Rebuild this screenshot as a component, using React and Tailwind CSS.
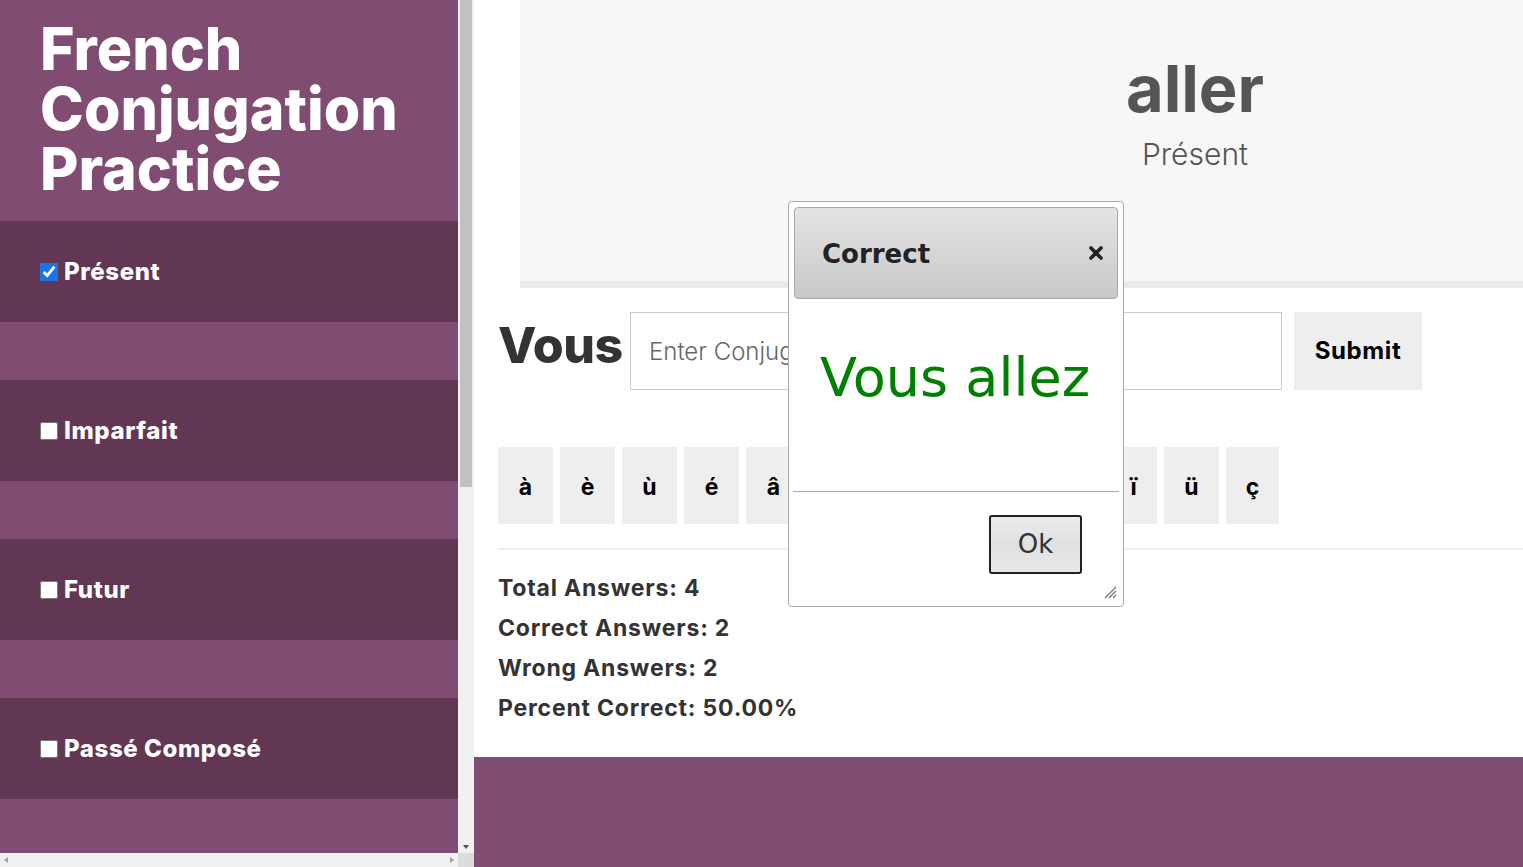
import { useState } from 'react'

const TENSES = ['Présent', 'Imparfait', 'Futur', 'Passé Composé']

// accent buttons, narrow ones for the i glyphs
const ACCENTS = [
  ['à', 'w-[55px]'], ['è', 'w-[55px]'], ['ù', 'w-[55px]'], ['é', 'w-[55px]'], ['â', 'w-[55px]'],
  ['ê', 'w-[55px]'], ['î', 'w-[47px]'], ['ô', 'w-[55px]'], ['û', 'w-[55px]'], ['ë', 'w-[55px]'],
  ['ï', 'w-[47px]'], ['ü', 'w-[55px]'], ['ç', 'w-[53px]'],
]

const STATS = [
  ['Total Answers', '4'],
  ['Correct Answers', '2'],
  ['Wrong Answers', '2'],
  ['Percent Correct', '50.00%'],
]

function Sidebar() {
  const [checked, setChecked] = useState({ 'Présent': true })

  return (
    <div className="flex h-full w-[474px] shrink-0 flex-col bg-white">
      <div className="flex min-h-0 flex-1">
        <div className="flex w-[458px] flex-col bg-[#804c72]">
          <h1 className="px-10 pt-[19px] pb-[22px] text-[59px] leading-[60px] font-extrabold tracking-[0px] text-white">
            French Conjugation Practice
          </h1>
          {TENSES.map(t => (
            <div key={t}>
              <label className="flex h-[101px] items-center gap-[6px] bg-[#623754] px-10 text-[24px] font-extrabold tracking-[0.6px] text-white">
                <input
                  type="checkbox"
                  checked={!!checked[t]}
                  onChange={() => setChecked(c => ({ ...c, [t]: !c[t] }))}
                  className="h-[18px] w-[18px] accent-[#1a73e8]"
                />
                {t}
              </label>
              <div className="h-[58px]" />
            </div>
          ))}
        </div>
        {/* vertical scrollbar */}
        <div className="relative flex w-[16px] flex-col bg-[#f1f1f1]">
          <div className="mx-[2px] h-[487px] bg-[#c1c1c1]" />
          <div className="absolute bottom-[4px] left-[5px] h-0 w-0 border-x-[3px] border-t-[4px] border-x-transparent border-t-[#505050]" />
        </div>
      </div>
      {/* horizontal scrollbar */}
      <div className="flex h-[14px]">
        <div className="flex w-[458px] items-center justify-between bg-[#f1f1f1] px-[4px]">
          <div className="h-0 w-0 border-y-[3px] border-r-[4px] border-y-transparent border-r-[#a3a3a3]" />
          <div className="h-0 w-0 border-y-[3px] border-l-[4px] border-y-transparent border-l-[#a3a3a3]" />
        </div>
        <div className="w-[16px] bg-[#dcdcdc]" />
      </div>
    </div>
  )
}

function Dialog() {
  return (
    <div className="absolute left-[788px] top-[201px] flex h-[406px] w-[336px] flex-col rounded-[4px] border border-[#aaaaaa] bg-white p-[5px] font-['DejaVu_Sans',sans-serif]">
      <div className="flex h-[92px] items-center justify-between rounded-[4px] border border-[#aaaaaa] bg-gradient-to-b from-[#e4e4e4] via-[#d6d6d6] to-[#c9c9c9] pl-[27px] pr-[14px]">
        <span className="mt-[2px] text-[26px] font-bold text-[#222]">Correct</span>
        <svg width="14" height="14" viewBox="0 0 14 14">
          <path d="M2 2 L12 12 M12 2 L2 12" stroke="#222" strokeWidth="3.6" strokeLinecap="round" />
        </svg>
      </div>
      <div className="flex h-[192px] items-start pl-[26px] pt-[52px]">
        <span className="text-[54px] leading-none text-[#008000]">Vous allez</span>
      </div>
      <div className="relative -mx-[1px] flex flex-1 justify-end border-t border-[#aaaaaa] pr-[37px] pt-[23px]">
        <button className="h-[59px] w-[93px] rounded-[3px] border-2 border-[#222] bg-gradient-to-b from-[#ececec] via-[#e0e0e0] to-[#e8e8e8] text-[26px] text-[#333]">
          Ok
        </button>
        <svg className="absolute bottom-[2px] right-[2px]" width="16" height="16" viewBox="0 0 16 16">
          <path d="M15 4 L4 15 M15 8 L8 15 M15 12 L12 15" stroke="#777" strokeWidth="1.3" />
        </svg>
      </div>
    </div>
  )
}

export default function App() {
  const [answer, setAnswer] = useState('')

  return (
    <div className="relative flex h-[867px] w-[1523px] overflow-hidden bg-white font-['Inter',sans-serif]">
      <Sidebar />

      <div className="flex min-w-0 flex-1 flex-col overflow-hidden">
        <div className="flex-1 pl-6">
          <div className="ml-[22px] flex h-[288px] w-[1350px] flex-col items-center border-b-[7px] border-[#ebebeb] bg-[#f7f7f7] pt-[52px]">
            <div className="text-[65px] leading-[74px] font-bold tracking-[0px] text-[#555]">aller</div>
            <div className="mt-[6px] text-[30px] font-light text-[#555]">Présent</div>
          </div>

          <div className="mt-[24px] flex h-[78px] items-center">
            <span className="flex h-[78px] w-[132px] items-center pb-[12px] text-[50px] font-extrabold tracking-[-0.5px] text-[#333]">Vous</span>
            <input
              value={answer}
              onChange={e => setAnswer(e.target.value)}
              placeholder="Enter Conjugation"
              className="h-[78px] w-[652px] border border-[#cccccc] px-[18px] text-[24px] font-light text-[#333] outline-none placeholder:text-[#666]"
            />
            <button className="ml-[12px] h-[78px] w-[128px] bg-[#eeeeee] text-[24px] font-bold tracking-[0.6px] text-black">Submit</button>
          </div>

          <div className="mt-[57px] flex gap-[7px]">
            {ACCENTS.map(([c, w]) => (
              <button key={c} className={`${w} h-[77px] bg-[#eeeeee] pt-[3px] text-[23px] font-bold text-black`}>{c}</button>
            ))}
          </div>

          <div className="mt-[24px] h-[2px] bg-[#eeeeee]" />

          <div className="mt-[18px] flex flex-col">
            {STATS.map(([k, v]) => (
              <div key={k} className="h-[40px] text-[23px] leading-[40px] font-bold tracking-[0.8px] text-[#333]">
                {k}: {v}
              </div>
            ))}
          </div>
        </div>

        <div className="h-[110px] shrink-0 bg-[#804c72]" />
      </div>

      <Dialog />
    </div>
  )
}
